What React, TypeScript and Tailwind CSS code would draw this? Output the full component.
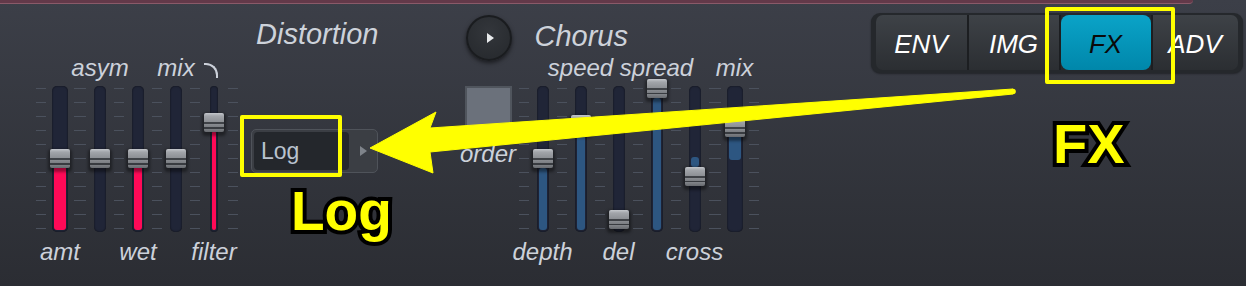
import React from 'react';

type SliderProps = {
  top?: React.ReactNode;
  bottom?: string;
  size: 'wide' | 'narrow' | 'thin';
  handle: number;
  fill?: [number, number];
  color?: 'pink' | 'blue';
};

const trackWidth = {
  wide: 'w-[16px]',
  narrow: 'w-[12px]',
  thin: 'w-[8px]',
};

const Ticks: React.FC<{ wide?: boolean }> = ({ wide }) => (
  <div
    className={`mt-[30px] h-[146px] ${
      wide ? 'w-[12px]' : 'w-[10px]'
    } bg-[repeating-linear-gradient(to_bottom,transparent_0px,transparent_2px,#4b515d_2px,#4b515d_3px,transparent_3px,transparent_14px)]`}
  />
);

const Slider: React.FC<SliderProps> = ({ top, bottom, size, handle, fill, color = 'pink' }) => (
  <div className="flex w-[20px] flex-col items-center">
    <div className="flex h-[30px] w-full justify-center whitespace-nowrap text-[24px] italic leading-none text-[#ccd1da]">
      {top}
    </div>
    <div className="relative flex h-[146px] w-full justify-center">
      <div
        className={`relative h-full ${trackWidth[size]} rounded-[5px] bg-[#202537] shadow-[inset_0_0_2px_rgba(0,0,0,0.7)]`}
      >
        {fill && (
          <div
            className={`absolute left-[2px] right-[2px] rounded-[3px] ${
              color === 'pink' ? 'bg-[#ff0a57]' : 'bg-[#2d5681]'
            }`}
            style={{ top: fill[0], height: fill[1] - fill[0] }}
          />
        )}
      </div>
      <div
        className="absolute left-0 h-[19px] w-[20px] rounded-[2px] bg-[linear-gradient(to_bottom,#c4c7cc_0px,#a2a5aa_3px,#8c8f94_9px,#3f4247_9px,#3f4247_11px,#898c91_11px,#7a7d82_14px,#383b40_14px,#383b40_15.5px,#808388_15.5px,#676a6f_19px)] shadow-[0_2px_3px_2px_rgba(0,0,0,0.4)]"
        style={{ top: handle }}
      />
    </div>
    <div className="flex w-full justify-center whitespace-nowrap pt-[8px] text-[24px] italic leading-none text-[#ccd1da]">
      {bottom}
    </div>
  </div>
);

const Hook = () => (
  <span className="mr-[6px] mt-[7px] h-[15px] w-[14px] rounded-tr-[12px] border-r-2 border-t-2 border-[#ccd1da]" />
);

const Tab: React.FC<{ label: string; active?: boolean; className?: string }> = ({ label, active, className = '' }) => (
  <div
    className={`flex items-center justify-center pt-[3px] text-[26px] italic leading-none ${
      active
        ? 'rounded-[8px] bg-[linear-gradient(to_bottom,#0aa3c8,#0087aa)] text-[#0a0a0a]'
        : 'bg-[linear-gradient(to_bottom,#3e4247,#2b2e32)] text-white'
    } ${className}`}
  >
    {label}
  </div>
);

const App: React.FC = () => {
  return (
    <div className="relative h-[286px] w-[1246px] overflow-hidden bg-[linear-gradient(to_bottom,#3c3f48_0%,#2b2d33_100%)] font-['Liberation_Sans',Arial,sans-serif]">
      {/* top strip */}
      <div className="h-[4px] w-[1193px] rounded-br-[4px] border-b border-[#8a5a69] bg-[#633949]" />

      <div className="flex items-start">
        {/* Distortion */}
        <div className="ml-[36px] flex flex-col">
          <div className="h-[52px] pl-[220px] pt-[16px] text-[29px] italic leading-none text-[#cdd2da]">
            Distortion
          </div>
          <div className="flex items-start">
            <div className="flex gap-[4px]">
              <Ticks />
              <Slider bottom="amt" size="wide" handle={63} fill={[80, 144]} />
              <Ticks wide />
              <Slider top="asym" size="narrow" handle={63} />
              <Ticks />
              <Slider bottom="wet" size="narrow" handle={63} fill={[80, 144]} />
              <Ticks />
              <Slider top="mix" size="narrow" handle={63} />
              <Ticks />
              <Slider top={<Hook />} bottom="filter" size="thin" handle={27} fill={[45, 144]} />
              <Ticks />
            </div>

            {/* dropdown */}
            <div className="ml-[13px] mt-[73px] flex h-[44px] w-[127px] rounded-[5px] border border-[#4f535a] bg-[#3b3e44] p-[2px]">
              <div className="flex w-[95px] items-center rounded-[4px] bg-[#24272c] pl-[7px] text-[23px] leading-none text-[#b9c2ce]">
                Log
              </div>
              <div className="flex flex-1 items-center justify-center pl-[3px]">
                <span className="h-0 w-0 border-y-[5px] border-l-[7px] border-y-transparent border-l-[#7f848b]" />
              </div>
            </div>
          </div>
        </div>

        {/* Chorus */}
        <div className="ml-[86px] flex flex-col">
          <div className="flex h-[52px] items-start">
            <div className="ml-[1px] mt-[11px] flex h-[46px] w-[46px] items-center justify-center rounded-full border-2 border-[#1a1c1f] bg-[radial-gradient(circle_at_50%_35%,#33363b,#25282c)] pl-[3px] shadow-[0_2px_4px_rgba(0,0,0,0.55)]">
              <span className="h-0 w-0 border-y-[5px] border-l-[7px] border-y-transparent border-l-[#e8eaec]" />
            </div>
            <div className="ml-[23px] mt-[18px] text-[29px] italic leading-none text-[#cdd2da]">Chorus</div>
          </div>
          <div className="flex items-start">
            <div className="flex w-[47px] flex-col items-center">
              <div className="mt-[30px] h-[46px] w-[47px] border-2 border-[#50555d] bg-[#6b717b]" />
              <div className="mt-[10px] whitespace-nowrap text-[24px] italic leading-none text-[#ccd1da]">order</div>
            </div>
            <div className="ml-[7px] flex gap-[4px]">
              <Ticks />
              <Slider bottom="depth" size="narrow" handle={63} fill={[82, 144]} color="blue" />
              <Ticks />
              <Slider top="speed" size="narrow" handle={29} fill={[48, 144]} color="blue" />
              <Ticks />
              <Slider bottom="del" size="narrow" handle={124} />
              <Ticks />
              <Slider top="spread" size="narrow" handle={-7} fill={[12, 144]} color="blue" />
              <Ticks />
              <Slider bottom="cross" size="narrow" handle={81} fill={[71, 81]} color="blue" />
              <Ticks wide />
              <Slider top="mix" size="wide" handle={32} fill={[47, 74]} color="blue" />
              <Ticks />
            </div>
          </div>
        </div>

        {/* Tabs */}
        <div className="ml-[112px] mt-[9px] flex h-[60px] rounded-[9px] bg-[#25282c] pb-[3px] pl-[5px] pr-[5px] pt-[2px] shadow-[0_1px_2px_rgba(0,0,0,0.4)]">
          <Tab label="ENV" className="w-[91px] rounded-l-[7px]" />
          <div className="w-[2px] bg-[#1c1e21]" />
          <Tab label="IMG" className="w-[90px]" />
          <div className="w-[2px] bg-[#1c1e21]" />
          <Tab label="FX" active className="w-[90px]" />
          <div className="w-[2px] bg-[#1c1e21]" />
          <Tab label="ADV" className="w-[85px] rounded-r-[7px]" />
        </div>
      </div>

      {/* annotations */}
      <div className="absolute left-[240px] top-[115px] h-[62px] w-[102px] rounded-[2px] border-4 border-[#ffff00]" />
      <div className="absolute left-[1045px] top-[7px] h-[77px] w-[130px] rounded-[2px] border-4 border-[#ffff00]" />

      <svg className="pointer-events-none absolute left-0 top-0" width="1246" height="286" viewBox="0 0 1246 286">
        <polygon
          points="370,148 436,112 430,128 1013,89 1013,94 430,152 433,173"
          fill="#ffff00"
          stroke="#ffff00"
          strokeWidth="1"
          strokeLinejoin="round"
        />
        <circle cx="1013" cy="91.5" r="2.8" fill="#ffff00" />
      </svg>

      <div className="absolute left-[291px] top-[184px] text-[55px] font-bold leading-none text-[#ffff00] [-webkit-text-stroke:8px_#000] [paint-order:stroke_fill]">
        Log
      </div>
      <div className="absolute left-[1053px] top-[116px] text-[56px] font-bold leading-none text-[#ffff00] [-webkit-text-stroke:8px_#000] [paint-order:stroke_fill]">
        FX
      </div>
    </div>
  );
};

export default App;
